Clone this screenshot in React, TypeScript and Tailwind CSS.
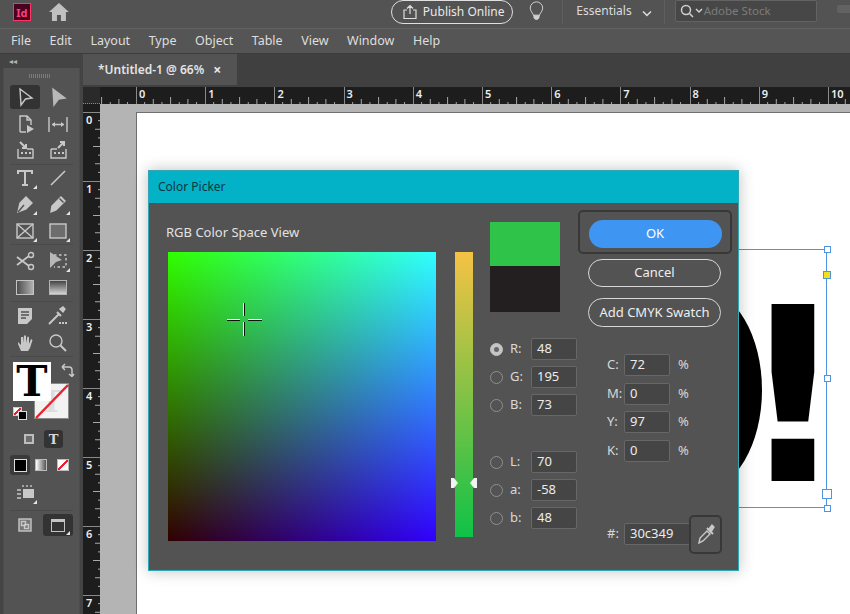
import type { ReactNode } from 'react'

const ink = '#c8c8c8'

function Ticks({ vertical = false, len = 69.2 }: { vertical?: boolean; len?: number }) {
  const depth = 17
  const step = len / 8
  const marks = [1, 2, 3, 4, 5, 6, 7]
  return (
    <svg
      width={vertical ? depth : len}
      height={vertical ? len : depth}
      className="absolute left-0 top-0"
    >
      {vertical ? (
        <line x1="0" y1="0.5" x2={depth} y2="0.5" stroke="#8a8a8a" />
      ) : (
        <line x1="0.5" y1="0" x2="0.5" y2={depth} stroke="#8a8a8a" />
      )}
      {marks.map((m) => {
        const size = m === 4 ? 7 : m % 2 === 0 ? 5 : 2
        const p = m * step
        return vertical ? (
          <line key={m} x1={depth - size} y1={p} x2={depth} y2={p} stroke="#a8a8a8" />
        ) : (
          <line key={m} x1={p} y1={depth - size} x2={p} y2={depth} stroke="#a8a8a8" />
        )
      })}
    </svg>
  )
}

function RulerH() {
  const labels = ['0', '1', '2', '3', '4', '5', '6', '7', '8', '9', '10']
  return (
    <div className="flex h-[17px] bg-[#1d1d1d]">
      <div className="relative h-[17px] w-[36px] shrink-0 overflow-hidden">
        <div className="absolute right-0 top-0 h-[17px] w-[69.2px]">
          <Ticks />
        </div>
      </div>
      {labels.map((l) => (
        <div key={l} className="relative h-[17px] w-[69.2px] shrink-0">
          <Ticks />
          <span className="absolute left-[3px] top-0 text-[11px] font-semibold leading-[13px] text-[#eeeeee]">{l}</span>
        </div>
      ))}
    </div>
  )
}

function RulerV() {
  const labels = ['0', '1', '2', '3', '4', '5', '6', '7']
  return (
    <div className="flex h-full w-[17px] shrink-0 flex-col overflow-hidden bg-[#1d1d1d]">
      <div className="h-[8px] shrink-0" />
      {labels.map((l) => (
        <div key={l} className="relative h-[69px] w-[17px] shrink-0">
          <Ticks vertical len={69} />
          <span className="absolute left-[3px] top-[1px] text-[11px] font-semibold leading-[13px] text-[#eeeeee]">{l}</span>
        </div>
      ))}
    </div>
  )
}

function Corner() {
  return (
    <svg width="4" height="4" className="absolute bottom-[1px] right-[3px]">
      <path d="M4 0V4H0Z" fill="#e4e4e4" />
    </svg>
  )
}

function Tool({ children, active, corner }: { children?: ReactNode; active?: boolean; corner?: boolean }) {
  return (
    <div className={`relative flex h-[24px] w-[30px] items-center justify-center rounded-[3px] ${active ? 'bg-[#333333]' : ''}`}>
      {children}
      {corner && <Corner />}
    </div>
  )
}

function Ico({ children, w = 20, h = 20 }: { children: ReactNode; w?: number; h?: number }) {
  return (
    <svg width={w} height={h} viewBox={`0 0 ${w} ${h}`} fill="none" stroke={ink} strokeWidth="1.4">
      {children}
    </svg>
  )
}

function ToolRow({ children }: { children: ReactNode }) {
  return <div className="flex h-[26.5px] items-center gap-[3px]">{children}</div>
}

function Toolbar() {
  return (
    <div className="flex w-[83px] shrink-0 flex-col bg-[#444444] px-[3px]">
      <div className="flex h-[14px] items-center pl-[6px] text-[8px] leading-none text-[#b5b5b5]">◂◂</div>
      <div className="flex flex-1 flex-col border-x border-[#4c4c4c] bg-[#535353] px-[6px]">
        <div className="flex h-[16px] items-center justify-center pr-[3px]">
          <div className="h-[4px] w-[22px] bg-[repeating-linear-gradient(to_right,#7a7a7a_0,#7a7a7a_1px,transparent_1px,transparent_2px)]" />
        </div>

        <div className="border-b border-[#4a4a4a]">
          <ToolRow>
            <Tool active>
              <Ico>
                <path d="M5 2 L17 11 L10.5 12 L6 18Z" />
              </Ico>
            </Tool>
            <Tool>
              <Ico>
                <path d="M5 2 L17 11 L10.5 12 L6 18Z" fill="#b8b8b8" stroke="#b8b8b8" />
              </Ico>
            </Tool>
          </ToolRow>
          <ToolRow>
            <Tool>
              <Ico>
                <path d="M5 18V2h7l4 4v5M12 2v4h4M5 18h6" />
                <path d="M12 11 L19 15 L12 19Z" fill={ink} stroke="none" />
              </Ico>
            </Tool>
            <Tool>
              <Ico>
                <path d="M1 3v15M19 3v15M4 10.5h12" />
                <path d="M4 10.5 7 8v5ZM16 10.5 13 8v5Z" fill={ink} stroke="none" />
              </Ico>
            </Tool>
          </ToolRow>
          <ToolRow>
            <Tool>
              <Ico>
                <path d="M3 9v9h15V9M12 9h6" />
                <path d="M5 2 L11 8M11 4v4H7" strokeWidth="2" />
                <path d="M6 13h2M10 13h2M14 13h2" strokeWidth="2" />
              </Ico>
            </Tool>
            <Tool>
              <Ico>
                <path d="M3 9v9h15V9M3 9h6" />
                <path d="M10 8 L16 2M12 2h4v4" strokeWidth="2" />
                <path d="M6 13h2M10 13h2M14 13h2" strokeWidth="2" />
              </Ico>
            </Tool>
          </ToolRow>
        </div>

        <div className="border-b border-[#4a4a4a]">
          <ToolRow>
            <Tool corner>
              <Ico>
                <path d="M3 6V3h14v3M10 3v14M7 17h6" strokeWidth="2" />
              </Ico>
            </Tool>
            <Tool>
              <Ico>
                <path d="M3 17 L17 3" strokeWidth="1.6" />
              </Ico>
            </Tool>
          </ToolRow>
          <ToolRow>
            <Tool corner>
              <Ico>
                <path d="M3 18 L5 9 L11 3 L17 9 L11 15Z" fill={ink} />
                <path d="M3 18 L9 11" stroke="#535353" />
              </Ico>
            </Tool>
            <Tool corner>
              <Ico>
                <path d="M3 18 L4 12 L13 3 L17 7 L8 16Z" fill={ink} />
                <path d="M11.5 4.5 L15.5 8.5" stroke="#535353" />
              </Ico>
            </Tool>
          </ToolRow>
          <ToolRow>
            <Tool corner>
              <Ico>
                <rect x="2" y="3" width="16" height="14" />
                <path d="M2 3 L18 17M18 3 L2 17" />
              </Ico>
            </Tool>
            <Tool corner>
              <Ico>
                <rect x="2" y="3" width="16" height="14" fill="#6d6d6d" />
              </Ico>
            </Tool>
          </ToolRow>
        </div>

        <div className="border-b border-[#4a4a4a] pt-[3px]">
          <ToolRow>
            <Tool>
              <Ico>
                <circle cx="16" cy="4" r="2.5" />
                <circle cx="16" cy="16" r="2.5" />
                <path d="M14 5 L2 14M14 15 L2 6" strokeWidth="1.7" />
              </Ico>
            </Tool>
            <Tool corner>
              <Ico>
                <path d="M6 4h12v12H6" strokeDasharray="2.5 2.5" />
                <path d="M2 1 L14 9 L8 11 L2 17Z" fill="#b8b8b8" stroke="none" />
              </Ico>
            </Tool>
          </ToolRow>
          <ToolRow>
            <Tool>
              <div className="h-[15px] w-[18px] border border-[#c4c4c4] bg-[linear-gradient(to_right,#4d4d4d,#b0b0b0)]" />
            </Tool>
            <Tool>
              <div className="h-[15px] w-[18px] border border-[#b4b4b4] bg-[linear-gradient(to_top,#d4d4d4,#444444)]" />
            </Tool>
          </ToolRow>
        </div>

        <div className="border-b border-[#4a4a4a] pt-[1px]">
          <ToolRow>
            <Tool>
              <Ico>
                <path d="M3 2h14v11l-5 5H3Z" fill={ink} stroke="none" />
                <path d="M6 6h8M6 9h8M6 12h5" stroke="#535353" />
              </Ico>
            </Tool>
            <Tool>
              <Ico w={22}>
                <path d="M2 18 L12 8 M10 6 L14 10" strokeWidth="2" />
                <path d="M13 3 L16 1 L18 3 L16 6Z" fill={ink} />
                <path d="M12 17h2M15 17h2M18 17h2" strokeWidth="2" />
              </Ico>
            </Tool>
          </ToolRow>
          <ToolRow>
            <Tool>
              <Ico>
                <path d="M6 18 L3 11 V9 L6 12 V4 L8 4 V10 L9 2.5 H11 V10 L12.5 3.5 L14 4 V11 L16 6 L17.5 7 L15 15 L13 18Z" fill={ink} stroke="none" />
              </Ico>
            </Tool>
            <Tool>
              <Ico>
                <circle cx="8" cy="8" r="6" />
                <path d="M12.5 12.5 L18 18" strokeWidth="2" />
              </Ico>
            </Tool>
          </ToolRow>
        </div>

        <div className="relative h-[69px]">
          <div className="absolute left-[24px] top-[26px] flex h-[36px] w-[35px] items-center justify-center overflow-hidden border border-[#8a8a8a] bg-[#f2f2f2] font-['DejaVu_Serif',serif] text-[30px] font-bold text-[#dddddd]">
            T
          </div>
          <svg width="35" height="36" className="absolute left-[24px] top-[26px]">
            <line x1="2" y1="35" x2="34" y2="2" stroke="#e8232f" strokeWidth="2.5" />
          </svg>
          <div className="absolute left-[3px] top-[5px] flex h-[39px] w-[38px] items-center justify-center bg-white font-['DejaVu_Serif',serif] text-[42px] font-bold leading-none text-black">
            T
          </div>
          <svg width="14" height="14" viewBox="0 0 14 14" fill="none" stroke={ink} strokeWidth="1.5" className="absolute left-[51px] top-[6px]">
            <path d="M1 4h7c2 0 3 1 3 3v6M1 4 4 1M1 4 4 7M8 11l3 2.5L13 11" />
          </svg>
          <div className="absolute left-[3px] top-[50px] h-[9px] w-[9px] border border-[#ccc] bg-[linear-gradient(135deg,#fff_40%,#e8232f_40%,#e8232f_60%,#fff_60%)]" />
          <div className="absolute left-[8px] top-[54px] h-[9px] w-[9px] border border-[#ddd] bg-black" />
        </div>

        <div className="flex h-[26px] items-center gap-[10px] pl-[14px]">
          <div className="h-[10px] w-[10px] border-2 border-[#bdbdbd] bg-[#6d6d6d]" />
          <div className="flex h-[18px] w-[19px] items-center justify-center rounded-[3px] bg-[#333333] font-['DejaVu_Serif',serif] text-[13px] font-bold leading-none text-[#d8d8d8]">
            T
          </div>
        </div>

        <div className="flex h-[26px] items-center gap-[5px]">
          <div className="flex h-[20px] w-[20px] items-center justify-center rounded-[3px] bg-[#3a3a3a]">
            <div className="h-[13px] w-[13px] border border-[#ddd] bg-black" />
          </div>
          <div className="h-[12px] w-[12px] border border-[#bbb] bg-[linear-gradient(to_right,#fff,#555)]" />
          <div className="ml-[5px] h-[12px] w-[12px] border border-[#bbb] bg-[linear-gradient(135deg,#fff_42%,#e8232f_42%,#e8232f_58%,#fff_58%)]" />
        </div>

        <div className="flex h-[33px] items-center border-b border-[#4a4a4a] pb-[2px]">
          <Tool corner>
            <Ico w={22}>
              <rect x="9" y="6" width="11" height="9" fill={ink} stroke="none" />
              <path d="M3 7h4M3 11h4M3 15h4M9 2v2M13 2v2M17 2v2" />
            </Ico>
          </Tool>
        </div>

        <div className="mt-[3px] flex h-[22px] items-center gap-[3px]">
          <Tool>
            <Ico w={14} h={14}>
              <rect x="1" y="1" width="12" height="12" fill="#777" />
              <rect x="3.5" y="3.5" width="4" height="4" />
              <rect x="6.5" y="6.5" width="4" height="4" />
            </Ico>
          </Tool>
          <div className="relative flex h-[22px] w-[30px] items-center justify-center rounded-[3px] bg-[#333333]">
            <div className="h-[13px] w-[14px] border-[1.5px] border-t-[3px] border-[#c4c4c4]" />
            <Corner />
          </div>
        </div>
      </div>
    </div>
  )
}

function Field({ label, value, width = 'w-[46px]' }: { label: string; value: string; width?: string }) {
  return (
    <div className="flex h-[22px] items-center">
      <span className="w-[17px] text-[13px] text-[#d8d8d8]">{label}</span>
      <div className={`flex h-[22px] items-center rounded-[2px] border border-[#676767] bg-[#454545] pl-[5px] text-[13px] text-[#ececec] ${width}`}>
        {value}
      </div>
    </div>
  )
}

function RadioField({ label, value, on }: { label: string; value: string; on?: boolean }) {
  return (
    <div className="flex h-[22px] items-center">
      <div className={`mr-[7px] flex h-[13px] w-[13px] items-center justify-center rounded-full border-[1.5px] ${on ? 'border-[#c4c4c4] bg-[#c4c4c4]' : 'border-[#8f8f8f]'}`}>
        {on && <div className="h-[5px] w-[5px] rounded-full bg-[#666666]" />}
      </div>
      <span className="w-[21px] text-[13px] text-[#d8d8d8]">{label}</span>
      <div className="flex h-[22px] w-[46px] items-center rounded-[2px] border border-[#676767] bg-[#454545] pl-[5px] text-[13px] text-[#ececec]">
        {value}
      </div>
    </div>
  )
}

function PercentField({ label, value }: { label: string; value: string }) {
  return (
    <div className="flex items-center">
      <Field label={label} value={value} />
      <span className="ml-[8px] text-[13px] text-[#d8d8d8]">%</span>
    </div>
  )
}

function Crosshair() {
  return (
    <svg width="37" height="35" className="absolute left-[58px] top-[50px]">
      <path d="M1 18.5h13M22 18.5h14M18.500 1v13M18.500 20v14" stroke="#111111" strokeWidth="1" />
      <path d="M1 17.5h13M22 17.5h14M17.500 1v13M17.500 20v14" stroke="#ffffff" strokeWidth="1" />
    </svg>
  )
}

function ColorPicker() {
  return (
    <div className="absolute left-[148px] top-[170px] flex h-[401px] w-[591px] flex-col border border-[#2fa7b5] bg-[#535353] shadow-[0_0_14px_rgba(0,0,0,0.25)]">
      <div className="flex h-[32px] shrink-0 items-center bg-[#03b2c6] pl-[9px] text-[12px] text-[#0a3644]">Color Picker</div>
      <div className="flex flex-1 pl-[19px]">
        <div className="w-[268px] shrink-0">
          <div className="-ml-[2px] mt-[20px] h-[18px] whitespace-nowrap text-[13px] leading-[18px] text-[#e2e2e2]">RGB Color Space View</div>
          <div className="relative mt-[11px] h-[289px] w-[268px] bg-[#300000] bg-[linear-gradient(to_top,#000000,#00ff00),linear-gradient(to_right,#000000,#0000ff)] bg-blend-screen">
            <Crosshair />
          </div>
        </div>

        <div className="relative ml-[19px] mt-[49px] h-[285px] w-[18px] shrink-0 bg-[linear-gradient(to_bottom,#f6c244,#0fc248)]">
          <svg width="26" height="10" className="absolute left-[-4px] top-[226px]">
            <path d="M0 0h3l4 5-4 5H0Z" fill="#f2f2f2" />
            <path d="M26 0h-3l-4 5 4 5h3Z" fill="#f2f2f2" />
          </svg>
        </div>

        <div className="ml-[17px] w-[87px] shrink-0">
          <div className="mt-[19px] h-[44px] w-[70px] bg-[#30c349]" />
          <div className="h-[46px] w-[70px] bg-[#231f20]" />
          <div className="mt-[26px] flex flex-col gap-[6px]">
            <RadioField label="R:" value="48" on />
            <RadioField label="G:" value="195" />
            <RadioField label="B:" value="73" />
          </div>
          <div className="mt-[35px] flex flex-col gap-[6px]">
            <RadioField label="L:" value="70" />
            <RadioField label="a:" value="-58" />
            <RadioField label="b:" value="48" />
          </div>
        </div>

        <div className="ml-[1px] w-[154px] shrink-0">
          <div className="mt-[7px] flex h-[44px] w-[154px] items-center justify-center rounded-[5px] border-2 border-[#383838] pt-[3px]">
            <div className="flex h-[28px] w-[133px] items-center justify-center rounded-full bg-[#3f96f2] text-[13px] text-white">OK</div>
          </div>
          <div className="ml-[10px] mt-[5px] flex h-[28px] w-[133px] items-center justify-center rounded-full border-[1.5px] border-[#d8d8d8] text-[13px] text-[#eeeeee]">Cancel</div>
          <div className="ml-[10px] mt-[11px] flex h-[29px] w-[133px] items-center justify-center whitespace-nowrap rounded-full border-[1.5px] border-[#d8d8d8] text-[13px] text-[#eeeeee]">Add CMYK Swatch</div>
          <div className="ml-[29px] mt-[27px] flex flex-col gap-[6.5px]">
            <PercentField label="C:" value="72" />
            <PercentField label="M:" value="0" />
            <PercentField label="Y:" value="97" />
            <PercentField label="K:" value="0" />
          </div>
          <div className="ml-[29px] mt-[53px] flex h-[39px] items-center">
            <Field label="#:" value="30c349" width="w-[66px]" />
            <div className="-ml-px flex h-[39px] w-[33px] items-center justify-center rounded-[5px] border-2 border-[#383838] bg-[#535353]">
              <svg width="20" height="22" viewBox="0 0 20 22" fill="none" stroke={ink} strokeWidth="1.4">
                <path d="M3 20 L4 15 L11 8 L14 11 L7 18Z" />
                <path d="M11 5 L17 11" strokeWidth="2" />
                <path d="M13 6 L16 2 L18 4 L15 9Z" fill={ink} />
              </svg>
            </div>
          </div>
        </div>
      </div>
    </div>
  )
}

function Handle({ x, y, size = 7, yellow }: { x: string; y: string; size?: number; yellow?: boolean }) {
  return (
    <div
      className={`absolute border border-[#4f94e0] ${yellow ? 'bg-[#f4df1c]' : 'bg-white'} ${x} ${y}`}
      style={{ width: size, height: size }}
    />
  )
}

export default function App() {
  return (
    <div className="relative flex h-[614px] w-[850px] flex-col overflow-hidden bg-[#535353] font-['Noto_Sans',sans-serif]">
      <div className="flex h-[29px] shrink-0 items-start border-b border-[#606060] pl-[13px]">
        <div className="mt-[3px] flex h-[18px] w-[18px] items-center justify-center border border-[#ff3366] bg-[#49021f] text-[11px] font-bold leading-none text-[#ff3f7e]">Id</div>
        <svg width="22" height="20" viewBox="0 0 22 20" className="ml-[17px] mt-[2px]" fill="#c0c0c0">
          <path d="M11 1 L21 10 H18 V19 H13 V13 H9 V19 H4 V10 H1Z" />
        </svg>
        <div className="ml-[321px] flex h-[24px] w-[123px] items-center rounded-full border-[1.5px] border-[#e0e0e0] pl-[11px] text-[12px] text-[#e8e8e8]">
          <svg width="14" height="16" viewBox="0 0 14 16" fill="none" stroke="#dddddd" strokeWidth="1.2">
            <path d="M4 6H1v8.500h12V6h-3M7 10V1.500M4 4.500 7 1.500 10 4.500" />
          </svg>
          <span className="ml-[6px] whitespace-nowrap">Publish Online</span>
        </div>
        <svg width="15" height="22" viewBox="0 0 18 24" fill="none" stroke="#cfcfcf" strokeWidth="1.2" className="ml-[16px]">
          <path d="M9 1a7.5 7.5 0 0 0-7.5 7.5c0 4 3.5 6 4.500 10h6c1-4 4.500-6 4.500-10A7.500 7.500 0 0 0 9 1Z" />
          <path d="M6 17h6v3l-1.500 2h-3L6 20Z" fill="#cfcfcf" />
        </svg>
        <div className="ml-[18px] h-[24px] w-px bg-[#5f5f5f]" />
        <span className="ml-[13px] mt-[2px] text-[12px] text-[#dcdcdc]">Essentials</span>
        <svg width="10" height="7" viewBox="0 0 10 7" fill="none" stroke="#dddddd" strokeWidth="1.6" className="ml-[10px] mt-[10px]">
          <path d="M1 1.500 5 5.500 9 1.500" />
        </svg>
        <div className="ml-[12px] h-[24px] w-px bg-[#5f5f5f]" />
        <div className="ml-[10px] flex h-[22px] w-[143px] items-center rounded-[2px] border border-[#636363] bg-[#474747] pl-[4px]">
          <svg width="24" height="14" viewBox="0 0 24 14" fill="none" stroke="#d0d0d0" strokeWidth="1.500">
            <circle cx="6" cy="6" r="4.500" />
            <path d="M9.500 9.500 13 13M16 5l3 3 3-3" />
          </svg>
          <span className="text-[11.5px] text-[#7c7c7c]">Adobe Stock</span>
        </div>
        <div className="ml-[20px] mt-[5px] h-[8px] w-[13px] rounded-l-[2px] bg-[#626262]" />
      </div>

      <div className="flex h-[25px] shrink-0 items-center gap-[18.500px] border-b border-[#3c3c3c] bg-[#555555] pl-[11px] text-[12.5px] text-[#dedede]">
        <span>File</span>
        <span>Edit</span>
        <span>Layout</span>
        <span>Type</span>
        <span>Object</span>
        <span>Table</span>
        <span>View</span>
        <span>Window</span>
        <span>Help</span>
      </div>

      <div className="flex min-h-0 flex-1">
        <Toolbar />
        <div className="flex min-w-0 flex-1 flex-col">
          <div className="flex h-[33px] shrink-0 bg-[#404040]">
            <div className="flex h-[31px] w-[154px] items-center bg-[#535353] pl-[15px] text-[12px] font-semibold text-[#e4e4e4]">
              <span className="whitespace-nowrap">*Untitled-1 @ 66%</span>
              <span className="ml-[9px] text-[14px] font-bold leading-none text-[#e8e8e8]">×</span>
            </div>
          </div>
          <div className="flex h-[17px] shrink-0">
            <div className="h-[17px] w-[17px] shrink-0 border-b border-dotted border-[#8a8a8a] bg-[#2a2a2a]" />
            <RulerH />
          </div>
          <div className="flex min-h-0 flex-1">
            <RulerV />
            <div className="flex-1 bg-[#b4b4b4] pl-[36px] pt-[8px]">
              <div className="h-full border-l border-t border-[#6f6f6f] bg-white" />
            </div>
          </div>
        </div>
      </div>

      <div className="absolute left-[642px] top-[290px] h-[200px] w-[120px] rounded-[50%] bg-black" />
      <div className="absolute left-[733px] top-[251px] w-[120px] text-center font-['DejaVu_Sans',sans-serif] text-[243px] font-bold leading-[1.2] text-black">!</div>
      <div className="absolute left-[738px] top-[249px] h-[259px] w-[89px] border-y border-r border-[#4f94e0]" />
      <Handle x="left-[824px]" y="top-[246px]" />
      <Handle x="left-[823px]" y="top-[271px]" size={8} yellow />
      <Handle x="left-[824px]" y="top-[375px]" />
      <Handle x="left-[822px]" y="top-[489px]" size={10} />
      <Handle x="left-[824px]" y="top-[505px]" />

      <ColorPicker />
    </div>
  )
}
